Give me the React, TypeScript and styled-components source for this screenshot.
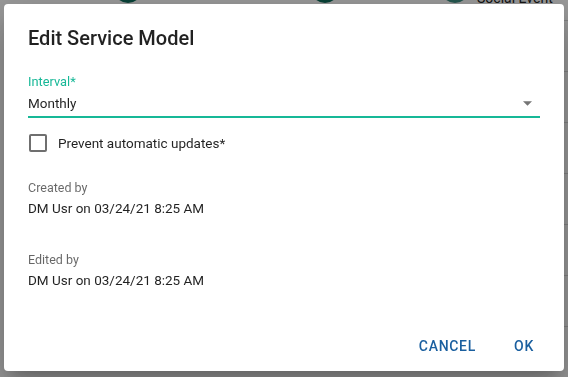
import styled, { createGlobalStyle } from 'styled-components';

const GlobalStyle = createGlobalStyle`
    html, body {
        margin: 0;
        padding: 0;
        background: #ffffff;
        font-family: Roboto, 'Liberation Sans', sans-serif;
        overflow: hidden;
    }
`;

// page behind the dialog
const rows = [
    { name: '', interval: '', status: '', date: '', label: 'Social Event', avatars: true },
    { name: 'Team Meeting', interval: 'Weekly', status: 'Scheduled', date: 'Jul 12, 2022' },
    { name: 'Quarterly Review', interval: 'Quarterly', status: 'Scheduled', date: 'Jul 14, 2022' },
    { name: 'Office Cleaning', interval: 'Monthly', status: 'Scheduled', date: 'Jul 15, 2022' },
    { name: 'Fire Drill', interval: 'Annual', status: 'Unscheduled', date: 'Jul 18, 2022' },
    { name: 'Server Backup', interval: 'Weekly', status: 'Scheduled', date: 'Jul 19, 2022' },
    { name: 'Parking Permit', interval: 'Annual', status: 'Unscheduled', date: 'Jul 20, 2022' },
    { name: 'Birthday Lunch', interval: 'Annual', status: 'Unscheduled', date: 'Jul 21, 2022' },
];

const App = () => {
    return (
        <>
            <GlobalStyle />
            <Page>
                {rows.map((row, i) => (
                    <Row key={i}>
                        {row.avatars ? (
                            <>
                                <Cell>
                                    <Avatar $left={70} />
                                </Cell>
                                <Cell>
                                    <Avatar $left={115} />
                                </Cell>
                                <Cell>
                                    <Avatar $left={143} $light />
                                </Cell>
                                <Cell>
                                    <EventLabel>{row.label}</EventLabel>
                                </Cell>
                            </>
                        ) : (
                            <>
                                <Cell>{row.name}</Cell>
                                <Cell>{row.interval}</Cell>
                                <Cell $blue>{row.status}</Cell>
                                <Cell>{row.date}</Cell>
                            </>
                        )}
                    </Row>
                ))}
            </Page>

            <Backdrop>
                <Dialog>
                    <Title>Edit Service Model</Title>
                    <Content>
                        <Field>
                            <FieldLabel>Interval*</FieldLabel>
                            <SelectBox>
                                <SelectValue>Monthly</SelectValue>
                                <Arrow viewBox="0 0 10 5">
                                    <path d="M0 0 L5 5 L10 0 Z" fill="#757575" />
                                </Arrow>
                            </SelectBox>
                        </Field>

                        <CheckRow>
                            <CheckBox />
                            <CheckLabel>Prevent automatic updates*</CheckLabel>
                        </CheckRow>

                        <InfoBlock>
                            <InfoLabel>Created by</InfoLabel>
                            <InfoValue>DM Usr on 03/24/21 8:25 AM</InfoValue>
                        </InfoBlock>
                        <InfoBlock>
                            <InfoLabel>Edited by</InfoLabel>
                            <InfoValue>DM Usr on 03/24/21 8:25 AM</InfoValue>
                        </InfoBlock>
                    </Content>
                    <Actions>
                        <TextButton>Cancel</TextButton>
                        <TextButton>OK</TextButton>
                    </Actions>
                </Dialog>
            </Backdrop>
        </>
    );
};

export default App;

const Page = styled.div`
    display: flex;
    flex-direction: column;
    margin-top: -30px;
    padding-left: 44px;
`;

const Row = styled.div`
    display: grid;
    grid-template-columns: 152px 102px 122px 1fr;
    align-items: center;
    height: 50px;
    border-bottom: 1px solid #d8d8d8;
    font-size: 14px;
    color: #222;
`;

const Cell = styled.div<{ $blue?: boolean }>`
    position: relative;
    height: 100%;
    display: flex;
    align-items: center;
    color: ${({ $blue }) => ($blue ? '#1a4f8a' : '#222')};
`;

// partly hidden avatar circles at the top of the page
const Avatar = styled.span<{ $left: number; $light?: boolean }>`
    position: absolute;
    left: ${({ $left }) => $left}px;
    top: 0;
    width: 28px;
    height: 33px;
    border-radius: 0 0 14px 14px;
    background: ${({ $light }) => ($light ? '#3f9184' : '#0e6e5c')};
`;

const EventLabel = styled.span`
    position: absolute;
    left: 57px;
    top: 20px;
    font-size: 14px;
    color: #222;
    white-space: nowrap;
`;

const Backdrop = styled.div`
    position: fixed;
    inset: 0;
    background: rgba(0, 0, 0, 0.4);
    padding: 4px;
    box-sizing: border-box;
`;

const Dialog = styled.div`
    width: 560px;
    height: 367px;
    background: #ffffff;
    border-radius: 4px;
    box-shadow: 0 11px 15px -7px rgba(0, 0, 0, 0.2),
        0 24px 38px 3px rgba(0, 0, 0, 0.14), 0 9px 46px 8px rgba(0, 0, 0, 0.12);
    display: flex;
    flex-direction: column;
    box-sizing: border-box;
`;

const Title = styled.h2`
    margin: 0;
    padding: 18px 24px 20px;
    font-size: 20px;
    font-weight: 500;
    line-height: 32px;
    color: rgba(0, 0, 0, 0.87);
`;

const Content = styled.div`
    flex: 1;
    padding: 0 24px;
    display: flex;
    flex-direction: column;
`;

const Field = styled.div`
    display: flex;
    flex-direction: column;
`;

const FieldLabel = styled.label`
    font-size: 12.8px;
    line-height: 16px;
    color: #17b897;
`;

const SelectBox = styled.div`
    display: flex;
    align-items: center;
    justify-content: space-between;
    height: 26px;
    border-bottom: 2px solid #17b897;
    padding-right: 8px;
`;

const SelectValue = styled.span`
    font-size: 13.5px;
    color: rgba(0, 0, 0, 0.87);
`;

const Arrow = styled.svg`
    width: 9px;
    height: 5px;
`;

const CheckRow = styled.div`
    display: flex;
    align-items: center;
    gap: 11px;
    margin-top: 16px;
    padding-left: 1px;
`;

const CheckBox = styled.span`
    width: 14px;
    height: 14px;
    border: 2px solid #6f6f6f;
    border-radius: 2px;
`;

const CheckLabel = styled.span`
    font-size: 13.5px;
    color: rgba(0, 0, 0, 0.87);
`;

const InfoBlock = styled.div`
    display: flex;
    flex-direction: column;
    gap: 6px;
    margin-top: 28px;

    & + & {
        margin-top: 36px;
    }
`;

const InfoLabel = styled.span`
    font-size: 12.5px;
    line-height: 15px;
    color: rgba(0, 0, 0, 0.6);
`;

const InfoValue = styled.span`
    font-size: 13.5px;
    line-height: 15px;
    color: rgba(0, 0, 0, 0.87);
`;

const Actions = styled.div`
    display: flex;
    justify-content: flex-end;
    align-items: center;
    gap: 8px;
    padding: 9px 8px 7px;
`;

const TextButton = styled.button`
    min-width: 64px;
    height: 36px;
    padding: 6px 8px;
    border: none;
    background: transparent;
    border-radius: 4px;
    font-family: Roboto, 'Liberation Sans', sans-serif;
    font-size: 14px;
    font-weight: 500;
    letter-spacing: 0.7px;
    text-transform: uppercase;
    color: #1a5f9f;
    cursor: pointer;
`;
